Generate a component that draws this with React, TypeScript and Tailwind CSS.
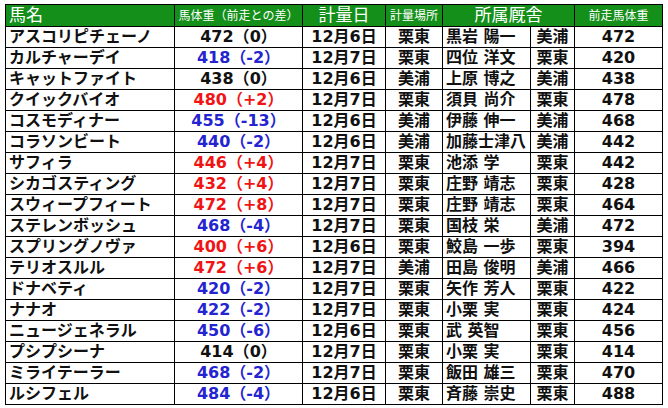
import React from "react"

type Row = {
    name: string
    weight: number
    diff: number
    date: string
    place: string
    trainer: string
    region: string
    prev: number
}

const rows: Row[] = [
    { name: "アスコリピチェーノ", weight: 472, diff: 0, date: "12月6日", place: "栗東", trainer: "黒岩 陽一", region: "美浦", prev: 472 },
    { name: "カルチャーデイ", weight: 418, diff: -2, date: "12月7日", place: "栗東", trainer: "四位 洋文", region: "栗東", prev: 420 },
    { name: "キャットファイト", weight: 438, diff: 0, date: "12月6日", place: "美浦", trainer: "上原 博之", region: "美浦", prev: 438 },
    { name: "クイックバイオ", weight: 480, diff: 2, date: "12月7日", place: "栗東", trainer: "須貝 尚介", region: "栗東", prev: 478 },
    { name: "コスモディナー", weight: 455, diff: -13, date: "12月6日", place: "美浦", trainer: "伊藤 伸一", region: "美浦", prev: 468 },
    { name: "コラソンビート", weight: 440, diff: -2, date: "12月6日", place: "美浦", trainer: "加藤士津八", region: "美浦", prev: 442 },
    { name: "サフィラ", weight: 446, diff: 4, date: "12月7日", place: "栗東", trainer: "池添 学", region: "栗東", prev: 442 },
    { name: "シカゴスティング", weight: 432, diff: 4, date: "12月7日", place: "栗東", trainer: "庄野 靖志", region: "栗東", prev: 428 },
    { name: "スウィープフィート", weight: 472, diff: 8, date: "12月7日", place: "栗東", trainer: "庄野 靖志", region: "栗東", prev: 464 },
    { name: "ステレンボッシュ", weight: 468, diff: -4, date: "12月7日", place: "栗東", trainer: "国枝 栄", region: "美浦", prev: 472 },
    { name: "スプリングノヴァ", weight: 400, diff: 6, date: "12月6日", place: "栗東", trainer: "鮫島 一歩", region: "栗東", prev: 394 },
    { name: "テリオスルル", weight: 472, diff: 6, date: "12月7日", place: "美浦", trainer: "田島 俊明", region: "美浦", prev: 466 },
    { name: "ドナベティ", weight: 420, diff: -2, date: "12月7日", place: "栗東", trainer: "矢作 芳人", region: "栗東", prev: 422 },
    { name: "ナナオ", weight: 422, diff: -2, date: "12月7日", place: "栗東", trainer: "小栗 実", region: "栗東", prev: 424 },
    { name: "ニュージェネラル", weight: 450, diff: -6, date: "12月6日", place: "栗東", trainer: "武 英智", region: "栗東", prev: 456 },
    { name: "プシプシーナ", weight: 414, diff: 0, date: "12月7日", place: "栗東", trainer: "小栗 実", region: "栗東", prev: 414 },
    { name: "ミライテーラー", weight: 468, diff: -2, date: "12月7日", place: "栗東", trainer: "飯田 雄三", region: "栗東", prev: 470 },
    { name: "ルシフェル", weight: 484, diff: -4, date: "12月6日", place: "栗東", trainer: "斉藤 崇史", region: "栗東", prev: 488 },
]

function diffText(d: number) {
    if (d > 0) return `+${d}`
    return `${d}`
}

function diffColor(d: number) {
    if (d > 0) return "text-[#f01414]"
    if (d < 0) return "text-[#2424d0]"
    return "text-[#111]"
}

const font = "font-['DejaVu_Sans','Noto_Sans_CJK_JP',sans-serif]"

export default function App() {
    return (
        <div className={`w-[668px] h-[408px] bg-white pt-[4px] pl-[5px] ${font}`}>
            <table className="table-fixed border-collapse border border-black w-[657px]">
                <colgroup>
                    <col className="w-[169px]" />
                    <col className="w-[128px]" />
                    <col className="w-[83px]" />
                    <col className="w-[57px]" />
                    <col className="w-[88px]" />
                    <col className="w-[44px]" />
                    <col className="w-[88px]" />
                </colgroup>
                <thead>
                    <tr className="h-[22px] bg-[#14901a] text-white font-normal">
                        <th className="border border-black text-left pl-[3px] text-[17px] font-normal leading-none">馬名</th>
                        <th className="border border-black text-[12px] font-normal leading-none whitespace-nowrap">馬体重（前走との差）</th>
                        <th className="border border-black text-[17px] font-normal leading-none">計量日</th>
                        <th className="border border-black text-[12px] font-normal leading-none whitespace-nowrap">計量場所</th>
                        <th colSpan={2} className="border border-black text-[17px] font-normal leading-none">所属厩舎</th>
                        <th className="border border-black text-[12px] font-normal leading-none">前走馬体重</th>
                    </tr>
                </thead>
                <tbody className="text-[16px] font-bold text-[#111] leading-none">
                    {rows.map((r) => (
                        <tr key={r.name} className="h-[21px]">
                            <td className="border border-black pl-[3px] whitespace-nowrap">{r.name}</td>
                            <td className={`border border-black text-center whitespace-nowrap ${diffColor(r.diff)}`}>
                                {r.weight}（{diffText(r.diff)}）
                            </td>
                            <td className="border border-black text-center whitespace-nowrap">{r.date}</td>
                            <td className="border border-black text-center">{r.place}</td>
                            <td className="border border-black pl-[3px] whitespace-nowrap">{r.trainer}</td>
                            <td className="border border-black text-center">{r.region}</td>
                            <td className="border border-black text-center">{r.prev}</td>
                        </tr>
                    ))}
                </tbody>
            </table>
        </div>
    )
}
